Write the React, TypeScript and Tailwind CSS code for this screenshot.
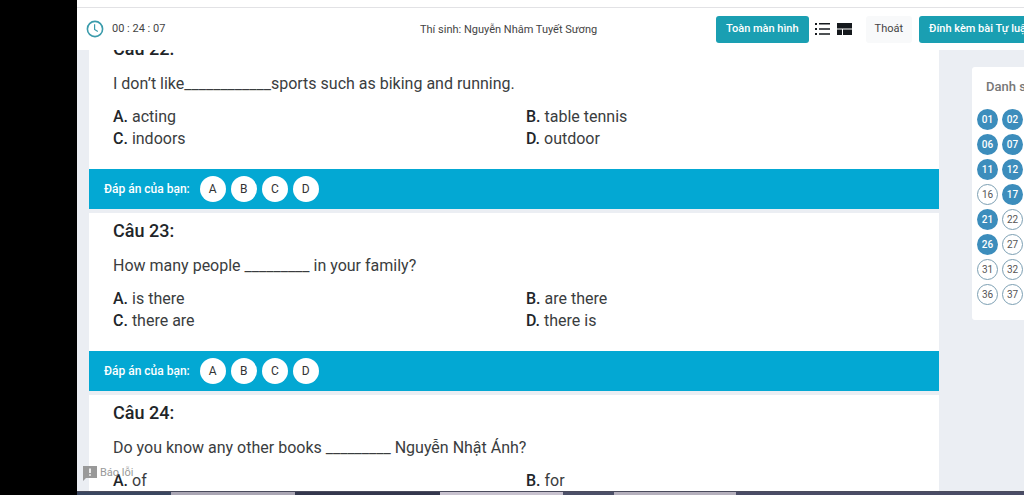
import React from "react";

type Question = {
  id: number;
  text: string;
  options: [string, string][];
};

const questions: Question[] = [
  {
    id: 22,
    text: "I don’t like____________sports such as biking and running.",
    options: [["A", "acting"], ["B", "table tennis"], ["C", "indoors"], ["D", "outdoor"]],
  },
  {
    id: 23,
    text: "How many people _________ in your family?",
    options: [["A", "is there"], ["B", "are there"], ["C", "there are"], ["D", "there is"]],
  },
  {
    id: 24,
    text: "Do you know any other books _________ Nguyễn Nhật Ánh?",
    options: [["A", "of"], ["B", "for"]],
  },
];

const numbers: [string, boolean][] = [
  ["01", true], ["02", true],
  ["06", true], ["07", true],
  ["11", true], ["12", true],
  ["16", false], ["17", true],
  ["21", true], ["22", false],
  ["26", true], ["27", false],
  ["31", false], ["32", false],
  ["36", false], ["37", false],
];

function ClockIcon() {
  return (
    <svg className="size-[18px] shrink-0" viewBox="0 0 18 18" fill="none" stroke="#3a9bab" aria-hidden="true">
      <circle cx="9" cy="9" r="7.6" strokeWidth="1.6" />
      <path d="M8.6 4.2v5.2l3.2 2" strokeWidth="1.2" />
    </svg>
  );
}

function ListIcon() {
  return (
    <svg className="h-3 w-[15px]" viewBox="0 0 15 12" fill="#15191d" aria-hidden="true">
      <path d="M0 0h2v2H0zM4 0h11v1.6H4zM0 5h2v2H0zM4 5.2h11v1.6H4zM0 10h2v2H0zM4 10.2h11v1.6H4z" />
    </svg>
  );
}

function LayoutIcon() {
  return (
    <svg className="h-3 w-[15px]" viewBox="0 0 15 12" fill="#15191d" aria-hidden="true">
      <path d="M0 0h15v5.4H0zM0 6.4h5V12H0zM6 6.4h9V12H6z" />
    </svg>
  );
}

function Header() {
  return (
    <header className="flex h-[43px] shrink-0 items-center border-t border-[#e2e2e5] bg-white pl-[9px] text-[#444]">
      <div className="flex w-[334px] shrink-0 items-center gap-2">
        <ClockIcon />
        <span className="text-[11px]">00 : 24 : 07</span>
      </div>
      <p className="flex-1 whitespace-nowrap pt-0.5 text-[11px]">Thí sinh: Nguyễn Nhâm Tuyết Sương</p>
      <div className="flex w-[308px] shrink-0 items-center whitespace-nowrap text-[11px] font-medium">
        <button className="h-[27px] shrink-0 rounded-[3px] bg-[#1a9fb2] px-2.5 text-white">Toàn màn hình</button>
        <button className="ml-1.5 shrink-0" aria-label="Danh sách"><ListIcon /></button>
        <button className="ml-[7px] shrink-0" aria-label="Bố cục"><LayoutIcon /></button>
        <button className="ml-3.5 h-[27px] shrink-0 rounded-[3px] bg-[#f8f9fa] px-[9px] font-normal">Thoát</button>
        <button className="ml-[7px] h-[27px] shrink-0 rounded-[3px] bg-[#1a9fb2] px-2.5 text-white">Đính kèm bài Tự luận</button>
      </div>
    </header>
  );
}

function QuestionCard({ question }: { question: Question }) {
  const complete = question.options.length === 4;
  return (
    <section>
      <div className="bg-white pt-1.5 pb-[19px] pl-6 text-base leading-[22px] text-[#3a3d40]">
        <h2 className="text-lg leading-6 font-medium text-[#212529]">Câu {question.id}:</h2>
        <p className="mt-3">{question.text}</p>
        <div className="mt-[11px] grid grid-cols-2">
          {question.options.map(([letter, answer]) => (
            <p key={letter}>
              <b className="font-medium text-[#212529]">{letter}.</b> {answer}
            </p>
          ))}
        </div>
      </div>
      {complete && (
        <div className="flex h-10 items-center bg-[#03a8d3] pl-[15px]">
          <span className="mr-2.5 text-xs font-medium text-white">Đáp án của bạn:</span>
          <div className="flex gap-[5px]">
            {question.options.map(([letter]) => (
              <button key={letter} className="size-[26px] rounded-full bg-white text-xs text-[#333]">
                {letter}
              </button>
            ))}
          </div>
        </div>
      )}
    </section>
  );
}

function QuestionList() {
  return (
    <aside className="mt-[17px] ml-[33px] w-36 shrink-0 self-start rounded-[3px] bg-white px-[5px] pt-3 pb-[15px]">
      <h3 className="pl-[9px] text-[13px] leading-4 font-medium whitespace-nowrap text-[#777]">Danh sách</h3>
      <div className="mt-3.5 grid grid-cols-[21px_21px] gap-1">
        {numbers.map(([n, done]) => (
          <button
            key={n}
            className={
              done
                ? "size-[21px] rounded-full bg-[#3c8dbc] text-[10px] font-medium text-white"
                : "size-[21px] rounded-full border border-[#7c9fb3] bg-white text-[10px] text-[#555]"
            }
          >
            {n}
          </button>
        ))}
      </div>
    </aside>
  );
}

export default function App() {
  return (
    <div className="relative flex h-screen overflow-hidden bg-black font-[Roboto,sans-serif]">
      <div className="ml-[77px] flex min-w-0 flex-1 flex-col bg-white pt-[7px]">
        <Header />
        <div className="flex min-h-0 flex-1 overflow-hidden bg-[#ebeef3] pl-3">
          <main className="-mt-[19px] flex min-w-0 flex-1 flex-col gap-1">
            {questions.map((q) => (
              <QuestionCard key={q.id} question={q} />
            ))}
          </main>
          <div className="flex w-[85px] shrink-0">
            <QuestionList />
          </div>
        </div>
        <footer className="flex h-1 shrink-0 border-t border-[#4a4b5c] bg-[#4a4c66]">
          <div className="w-[94px] bg-[#3a4660]" />
          <div className="w-[124px] bg-[#aaa6b4]" />
          <div className="w-[145px] bg-[#34374d]" />
          <div className="w-[123px] bg-[#c8c2cf]" />
          <div className="w-[51px] bg-[#4c5068]" />
          <div className="w-[122px] bg-[#b5b0bd]" />
        </footer>
      </div>
      <button className="absolute bottom-3.5 left-[82px] flex items-center gap-0.5 text-[11px] text-[#999]">
        <svg className="size-4" viewBox="0 0 16 16" aria-hidden="true">
          <path d="M1 1h14v12H4l-3 3z" fill="#999" />
          <path d="M7.2 3.5h1.6V8H7.2zM7.2 9.2h1.6v1.6H7.2z" fill="#fff" />
        </svg>
        Báo lỗi
      </button>
    </div>
  );
}
